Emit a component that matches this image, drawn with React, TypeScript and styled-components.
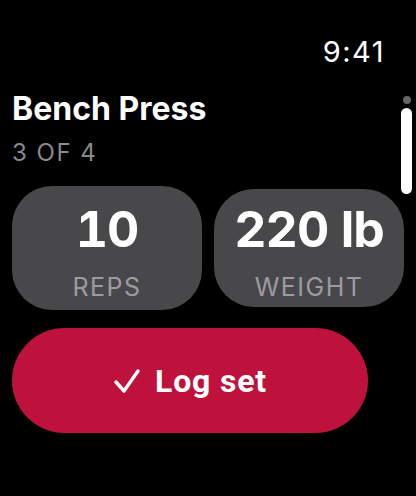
import styled, { createGlobalStyle } from "styled-components";

const GlobalStyle = createGlobalStyle`
  html, body {
    margin: 0;
    padding: 0;
    background: #000;
  }
  body {
    font-family: Inter, Roboto, "Liberation Sans", sans-serif;
    color: #fff;
  }
`;

const Screen = styled.div`
  position: relative;
  width: 416px;
  height: 496px;
  box-sizing: border-box;
  padding: 34px 12px 0 12px;
  display: flex;
  flex-direction: column;
  overflow: hidden;
`;

const StatusBar = styled.div`
  display: flex;
  justify-content: flex-end;
  padding-right: 19px;
`;

const Hora = styled.span`
  font-size: 29px;
  line-height: 36px;
  font-weight: 400;
  letter-spacing: 1.5px;
`;

const Titulo = styled.h1`
  margin: 20px 0 0 0;
  font-size: 32px;
  line-height: 38px;
  font-weight: 700;
`;

const Subtitulo = styled.p`
  margin: 10px 0 0 0;
  font-size: 24px;
  line-height: 30px;
  letter-spacing: 1.5px;
  color: #8a8a8e;
`;

const Linha = styled.div`
  margin-top: 18px;
  display: flex;
  align-items: center;
  gap: 12px;
`;

const Cartao = styled.div<{ $altura: number }>`
  width: 190px;
  height: ${(p) => p.$altura}px;
  box-sizing: border-box;
  padding-top: 8px;
  border-radius: 40px;
  background: #48484a;
  display: flex;
  flex-direction: column;
  align-items: center;
  justify-content: center;
`;

const Valor = styled.span`
  font-size: 50px;
  line-height: 54px;
  font-weight: 700;
  letter-spacing: -1px;
  font-variant-numeric: tabular-nums;
`;

const Rotulo = styled.span`
  margin-top: 16px;
  font-size: 25px;
  line-height: 30px;
  letter-spacing: 1.5px;
  color: #9c9ca0;
`;

const Botao = styled.button`
  margin-top: 18px;
  width: 356px;
  height: 105px;
  border: none;
  border-radius: 53px;
  background: #be123c;
  color: #fff;
  font-family: Roboto, "Liberation Sans", sans-serif;
  font-size: 32px;
  font-weight: 700;
  letter-spacing: 0.8px;
  display: flex;
  align-items: center;
  justify-content: center;
  gap: 14px;
  padding: 0;
`;

const Rolagem = styled.div`
  position: absolute;
  top: 96px;
  right: 4px;
  display: flex;
  flex-direction: column;
  align-items: center;
  gap: 4px;
`;

const Ponto = styled.div`
  width: 8px;
  height: 8px;
  border-radius: 50%;
  background: #666;
`;

const Barra = styled.div`
  width: 11px;
  height: 86px;
  border-radius: 6px;
  background: #fff;
`;

function Check() {
  return (
    <svg width="28" height="28" viewBox="0 0 28 28" fill="none">
      <path d="M3 15 L11 24 L25 4" stroke="#fff" strokeWidth="3.4" strokeLinecap="round" strokeLinejoin="round" />
    </svg>
  );
}

export default function App() {
  return (
    <>
      <GlobalStyle />
      <Screen>
        <StatusBar>
          <Hora>9:41</Hora>
        </StatusBar>
        <Titulo>Bench Press</Titulo>
        <Subtitulo>3 OF 4</Subtitulo>
        <Linha>
          <Cartao $altura={124}>
            <Valor>10</Valor>
            <Rotulo>REPS</Rotulo>
          </Cartao>
          <Cartao $altura={118}>
            <Valor>220 lb</Valor>
            <Rotulo>WEIGHT</Rotulo>
          </Cartao>
        </Linha>
        <Botao>
          <Check />
          Log set
        </Botao>
        <Rolagem>
          <Ponto />
          <Barra />
        </Rolagem>
      </Screen>
    </>
  );
}
